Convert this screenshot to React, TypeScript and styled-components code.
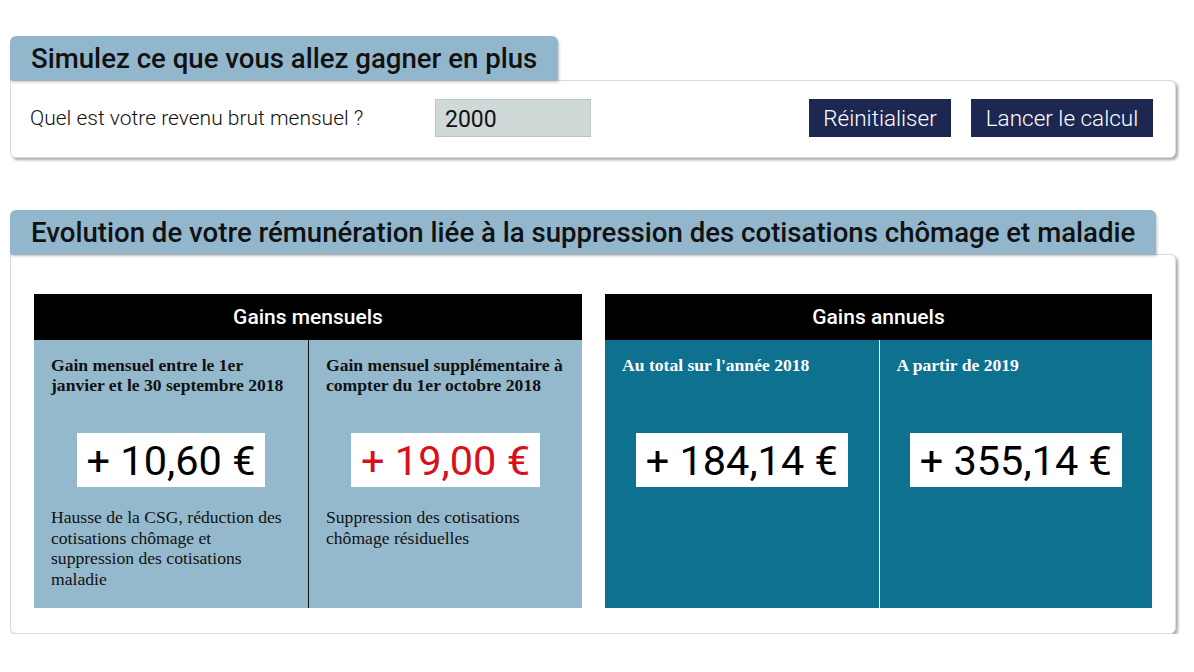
import React, { useState } from 'react';
import styled, { createGlobalStyle } from 'styled-components';

const GlobalStyle = createGlobalStyle`
  html, body {
    margin: 0;
    padding: 0;
    background: #fff;
  }
  body {
    font-family: Roboto, "Liberation Sans", Arial, sans-serif;
    color: #111;
  }
`;

const Page = styled.div`
  padding: 36px 18px 0 10px;
  width: 1166px;
`;

const Section = styled.section<{ $gap?: number }>`
  margin-bottom: ${(p) => p.$gap ?? 0}px;
`;

const Tab = styled.h2`
  display: inline-block;
  margin: 0;
  height: 44px;
  line-height: 46px;
  padding: 0 21px;
  background: #92b7cc;
  border-radius: 6px 6px 0 0;
  box-shadow: 1px 2px 3px rgba(0, 0, 0, 0.25);
  font-size: 27.6px;
  font-weight: 500;
  color: #111;
  white-space: nowrap;
  position: relative;
  z-index: 1;
`;

const Card = styled.div<{ $pad: string }>`
  background: #fff;
  border: 1px solid #dcdcdc;
  border-radius: 0 6px 6px 6px;
  box-shadow: 2px 2px 3px rgba(0, 0, 0, 0.35);
  padding: ${(p) => p.$pad};
`;

const FormRow = styled.div`
  display: flex;
  align-items: center;
  height: 38px;
`;

const Label = styled.label`
  font-size: 21px;
  font-weight: 300;
  width: 405px;
  color: #111;
`;

const Input = styled.input`
  box-sizing: border-box;
  width: 156px;
  height: 38px;
  border: 1px solid #bcc4c4;
  background: #cfd9d8;
  font-family: Roboto, "Liberation Sans", Arial, sans-serif;
  font-size: 23px;
  padding: 2px 9px 0;
  color: #111;
  outline: none;
`;

const Actions = styled.div`
  margin-left: auto;
  display: flex;
  gap: 20px;
`;

const Button = styled.button<{ $w: number }>`
  width: ${(p) => p.$w}px;
  height: 38px;
  padding: 0;
  border: none;
  background: #1d2852;
  color: #fff;
  font-family: Roboto, "Liberation Sans", Arial, sans-serif;
  font-size: 22.5px;
  font-weight: 300;
  cursor: pointer;
`;

const Blocks = styled.div`
  display: grid;
  grid-template-columns: 548px 547px;
  gap: 23px;
`;

const Block = styled.div`
  display: flex;
  flex-direction: column;
`;

const BlockHead = styled.div`
  height: 46px;
  background: #000;
  color: #fff;
  font-size: 21px;
  font-weight: 500;
  display: flex;
  align-items: center;
  justify-content: center;
`;

const BlockBody = styled.div<{ $dark?: boolean }>`
  height: 268px;
  display: grid;
  grid-template-columns: 1fr 1fr;
  background: ${(p) => (p.$dark ? '#0e718f' : '#95b9cc')};
`;

const Cell = styled.div<{ $dark?: boolean; $divider?: boolean }>`
  padding: 15px 10px 0 17px;
  border-left: ${(p) =>
    p.$divider ? `1px solid ${p.$dark ? '#e6f0f4' : '#111'}` : 'none'};
  color: ${(p) => (p.$dark ? '#fff' : '#111')};
  display: flex;
  flex-direction: column;
`;

const CellTitle = styled.div`
  font-family: "Liberation Serif", "Times New Roman", serif;
  font-weight: 700;
  font-size: 17.6px;
  line-height: 20px;
  height: 40px;
`;

const Value = styled.div<{ $red?: boolean }>`
  align-self: center;
  margin: 38px 7px 0 0;
  height: 54px;
  padding: 0 10px;
  background: #fff;
  color: ${(p) => (p.$red ? '#d90f1a' : '#000')};
  font-size: 41.5px;
  line-height: 56px;
  white-space: nowrap;
`;

const Desc = styled.p`
  margin: 20px 0 0;
  font-family: "Liberation Serif", "Times New Roman", serif;
  font-size: 17.6px;
  line-height: 20.5px;
`;

type Gain = { title: string; value: string; desc?: string; red?: boolean };

const monthly: Gain[] = [
  {
    title: 'Gain mensuel entre le 1er janvier et le 30 septembre 2018',
    value: '+ 10,60 €',
    desc: 'Hausse de la CSG, réduction des cotisations chômage et suppression des cotisations maladie',
  },
  {
    title: 'Gain mensuel supplémentaire à compter du 1er octobre 2018',
    value: '+ 19,00 €',
    desc: 'Suppression des cotisations chômage résiduelles',
    red: true,
  },
];

const yearly: Gain[] = [
  { title: "Au total sur l'année 2018", value: '+ 184,14 €' },
  { title: 'A partir de 2019', value: '+ 355,14 €' },
];

const GainBlock = ({
  heading,
  items,
  dark,
}: {
  heading: string;
  items: Gain[];
  dark?: boolean;
}) => (
  <Block>
    <BlockHead>{heading}</BlockHead>
    <BlockBody $dark={dark}>
      {items.map((g, i) => (
        <Cell key={i} $dark={dark} $divider={i > 0}>
          <CellTitle>{g.title}</CellTitle>
          <Value $red={g.red}>{g.value}</Value>
          {g.desc && <Desc>{g.desc}</Desc>}
        </Cell>
      ))}
    </BlockBody>
  </Block>
);

const App = () => {
  const [revenu, setRevenu] = useState('2000');

  return (
    <Page>
      <GlobalStyle />
      <Section $gap={52}>
        <Tab>Simulez ce que vous allez gagner en plus</Tab>
        <Card $pad="18px 22px 20px 19px">
          <FormRow>
            <Label htmlFor="revenu">Quel est votre revenu brut mensuel ?</Label>
            <Input
              id="revenu"
              value={revenu}
              onChange={(e) => setRevenu(e.target.value)}
            />
            <Actions>
              <Button $w={142} onClick={() => setRevenu('')}>
                Réinitialiser
              </Button>
              <Button $w={182}>Lancer le calcul</Button>
            </Actions>
          </FormRow>
        </Card>
      </Section>
      <Section>
        <Tab>
          Evolution de votre rémunération liée à la suppression des cotisations
          chômage et maladie
        </Tab>
        <Card $pad="39px 23px 25px 23px">
          <Blocks>
            <GainBlock heading="Gains mensuels" items={monthly} />
            <GainBlock heading="Gains annuels" items={yearly} dark />
          </Blocks>
        </Card>
      </Section>
    </Page>
  );
};

export default App;
